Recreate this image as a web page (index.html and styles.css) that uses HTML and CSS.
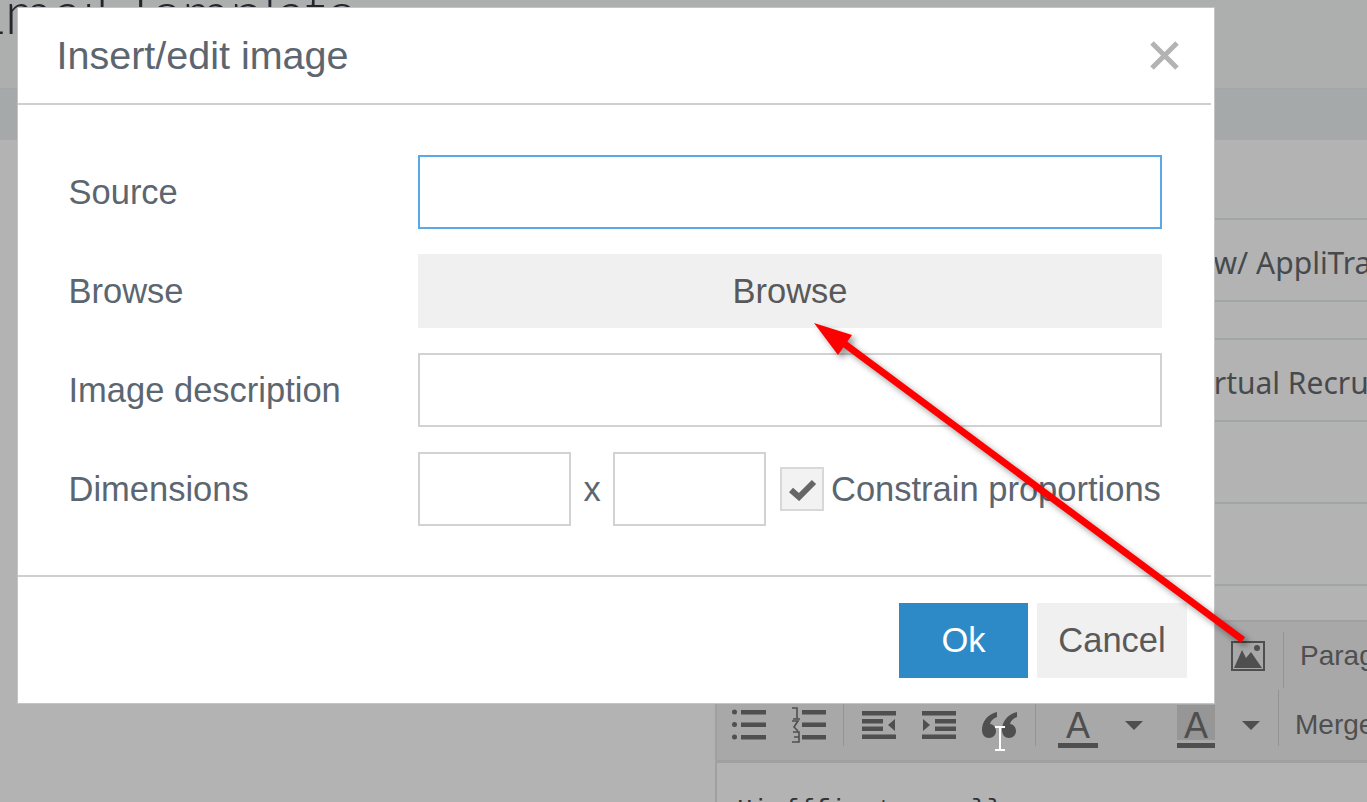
FILE: index.html
```html
<!DOCTYPE html>
<html lang="en">
<head>
    <meta charset="UTF-8">
    <title>Email Template</title>
    <link rel="stylesheet" href="styles.css">
</head>

<body>
    <div id="page">
        <div class="page-header">
            <h1 class="page-title">Email Template</h1>
        </div>
        <div class="tab-bar"></div>

        <div class="page-content">
            <div class="row row-tall"><span class="row-text row-text-first">Interview w/ AppliTrack</span></div>
            <div class="row row-short"></div>
            <div class="row row-tall"><span class="row-text row-text-second">Virtual Recruiter</span></div>
            <div class="row row-tall"></div>
            <div class="row row-tall"></div>
            <div class="row row-last"></div>

            <!--editor-->
            <div class="editor">
                <div class="toolbar toolbar-top">
                    <span class="tool tool-image">
                        <svg width="34" height="30" viewBox="0 0 34 30">
                            <rect x="1" y="1" width="32" height="28" fill="none" stroke="#4f4f4f" stroke-width="2"/>
                            <path d="M3 27 L11 9 L15 17 L20 11 L31 27 Z" fill="#4f4f4f"/>
                            <circle cx="26" cy="7" r="3" fill="#4f4f4f"/>
                        </svg>
                    </span>
                    <span class="sep sep-image"></span>
                    <span class="tool-text">Paragraph</span>
                </div>
                <div class="toolbar toolbar-bottom">
                    <span class="tool">
                        <svg width="34" height="34" viewBox="0 0 34 34" fill="#4f4f4f">
                            <circle cx="2.500" cy="4" r="2.500"/><rect x="9" y="2" width="25" height="4.500"/>
                            <circle cx="2.500" cy="16.500" r="2.500"/><rect x="9" y="14.500" width="25" height="4.500"/>
                            <circle cx="2.500" cy="29" r="2.500"/><rect x="9" y="27" width="25" height="4.500"/>
                        </svg>
                    </span>
                    <span class="tool">
                        <svg width="34" height="36" viewBox="0 0 34 36" fill="#4f4f4f">
                            <path d="M0 1 H5 V12 M1 12 H8 M0 14 H6 L2 20 L6 24 M1 25 H7 V35 H0 M2 30 H7" fill="none" stroke="#4f4f4f" stroke-width="1.600"/>
                            <rect x="10" y="3" width="24" height="4.500"/>
                            <rect x="10" y="15.500" width="24" height="4.500"/>
                            <rect x="10" y="28" width="24" height="4.500"/>
                        </svg>
                    </span>
                    <span class="sep"></span>
                    <span class="tool">
                        <svg width="34" height="28" viewBox="0 0 34 28" fill="#4f4f4f">
                            <rect x="0" y="0" width="34" height="4.500"/>
                            <rect x="0" y="8" width="21" height="4.500"/>
                            <rect x="0" y="15.500" width="21" height="4.500"/>
                            <rect x="0" y="23.500" width="34" height="4.500"/>
                            <path d="M26 14 L33 8 V20 Z"/>
                        </svg>
                    </span>
                    <span class="tool">
                        <svg width="34" height="28" viewBox="0 0 34 28" fill="#4f4f4f">
                            <rect x="0" y="0" width="34" height="4.500"/>
                            <rect x="13" y="8" width="21" height="4.500"/>
                            <rect x="13" y="15.500" width="21" height="4.500"/>
                            <rect x="0" y="23.500" width="34" height="4.500"/>
                            <path d="M8 14 L1 8 V20 Z"/>
                        </svg>
                    </span>
                    <span class="tool">
                        <svg width="35" height="26" viewBox="0 0 35 26" fill="#4f4f4f">
                            <path d="M15 0 C6 2 0 9 0 18 C0 23 3 26 7 26 C11 26 14 23 14 19 C14 15 11 12 8 12 C9 8 12 6 15 5 Z"/>
                            <path d="M35 0 C26 2 20 9 20 18 C20 23 23 26 27 26 C31 26 34 23 34 19 C34 15 31 12 28 12 C29 8 32 6 35 5 Z"/>
                        </svg>
                    </span>
                    <span class="sep sep-quote"></span>
                    <span class="color-btn">
                        <span class="color-a">A</span>
                        <span class="color-bar"></span>
                    </span>
                    <span class="caret caret-first"></span>
                    <span class="color-btn color-btn-active">
                        <span class="color-a">A</span>
                        <span class="color-bar"></span>
                    </span>
                    <span class="caret caret-second"></span>
                    <span class="sep sep-merge"></span>
                    <span class="tool-text">Merge Fields</span>
                </div>
                <div class="editor-body">Hi {{first_name}},</div>
            </div>
        </div>
    </div>

    <!--dialog-->
    <div class="modal">
        <div class="modal-head">
            <h2 class="modal-title">Insert/edit image</h2>
            <svg class="modal-close" width="31" height="31" viewBox="0 0 31 31">
                <path d="M3 3 L28 28 M28 3 L3 28" stroke="#b3b3b3" stroke-width="5" fill="none"/>
            </svg>
        </div>
        <div class="modal-body">
            <div class="form-row">
                <label class="form-label">Source</label>
                <input type="text" class="field field-focus">
            </div>
            <div class="form-row">
                <label class="form-label">Browse</label>
                <button type="button" class="btn btn-browse">Browse</button>
            </div>
            <div class="form-row">
                <label class="form-label">Image description</label>
                <input type="text" class="field">
            </div>
            <div class="form-row">
                <label class="form-label">Dimensions</label>
                <div class="dims">
                    <input type="text" class="field field-small">
                    <span class="dims-x">x</span>
                    <input type="text" class="field field-small">
                    <span class="check">
                        <svg width="29" height="23" viewBox="0 0 29 23">
                            <path d="M3 12 L11 19 L26 4" fill="none" stroke="#666666" stroke-width="6"/>
                        </svg>
                    </span>
                    <span class="check-label">Constrain proportions</span>
                </div>
            </div>
        </div>
        <div class="modal-foot">
            <button type="button" class="btn btn-ok">Ok</button>
            <button type="button" class="btn btn-cancel">Cancel</button>
        </div>
    </div>

    <!--annotation arrow and mouse cursor-->
    <svg class="arrow" width="1367" height="802" viewBox="0 0 1367 802">
        <path d="M1243 640 L842 342" stroke="#ff0000" stroke-width="7" fill="none"/>
        <path d="M814 323 L852 335 L838 355 Z" fill="#ff0000"/>
    </svg>
    <svg class="cursor" width="12" height="25" viewBox="0 0 12 25">
        <path d="M1 1 H11 M1 24 H11 M6 1 V24" stroke="#ffffff" stroke-width="2" fill="none"/>
    </svg>
</body>
</html>
```

FILE: styles.css
```css
body {
    margin: 0;
    width: 1367px;
    height: 802px;
    overflow: hidden;
    font-family: "Liberation Sans", Arial, sans-serif;
    background-color: #b3b3b3;
}
#page {
    height: 802px;
    overflow: hidden;
}
.page-header {
    height: 88px;
    background-color: #adafae;
    border-bottom: 1px solid #a3a7a7;
    overflow: hidden;
}
.page-title {
    margin: -21px 0 0 -29px;
    font-family: "Lato", sans-serif;
    font-weight: 300;
    font-size: 60px;
    line-height: 64px;
    color: #23262d;
    white-space: nowrap;
}
.tab-bar {
    height: 51px;
    background-color: #a5a9a9;
}
.page-content {
    padding-top: 78px;
}
.row {
    box-sizing: border-box;
    margin-left: 715px;
    padding-top: 4px;
    border-top: 2px solid #a0a5a5;
    display: flex;
    align-items: center;
    font-family: "Noto Sans", sans-serif;
    font-size: 30px;
    color: #464a4d;
    white-space: nowrap;
}
.row-tall {
    height: 82px;
}
.row-short {
    height: 38px;
}
.row-last {
    height: 36px;
}
.row-text-first {
    margin-left: 359px;
}
.row-text-second {
    margin-left: 473px;
}
.editor {
    margin-left: 715px;
    border-left: 2px solid #a0a0a0;
}
.toolbar {
    display: flex;
    align-items: center;
    background-color: #a8a8a8;
    color: #4f4f4f;
    white-space: nowrap;
}
.toolbar > * {
    flex: none;
}
.toolbar-top {
    height: 70px;
    padding-left: 514px;
    border-top: 2px solid #a0a0a0;
    box-sizing: border-box;
}
.toolbar-bottom {
    height: 70px;
    padding-left: 15px;
}
.tool {
    display: flex;
    margin-right: 26px;
}
.tool-image {
    margin-right: 18px;
}
.tool-text {
    font-size: 28px;
    margin-left: 16px;
}
.sep {
    width: 1px;
    height: 56px;
    margin-right: 18px;
    margin-left: -9px;
    background-color: #939393;
    align-self: flex-start;
}
.sep-image {
    margin: 10px 0 0;
}
.sep-quote {
    margin-left: -8px;
    margin-right: 22px;
}
.sep-merge {
    margin-left: 18px;
    margin-right: 0;
}
.color-btn {
    width: 40px;
    height: 43px;
    margin-top: 2px;
    display: flex;
    flex-direction: column;
    align-items: center;
}
.color-btn-active {
    width: 38px;
}
.color-a {
    width: 100%;
    height: 35px;
    text-align: center;
    font-size: 36px;
    line-height: 41px;
}
.color-bar {
    width: 100%;
    height: 5px;
    margin-top: 3px;
    background-color: #4f4f4f;
}
.color-btn-active .color-a {
    background-color: #969696;
}
.caret {
    width: 0;
    height: 0;
    border-left: 9px solid transparent;
    border-right: 9px solid transparent;
    border-top: 9px solid #4f4f4f;
}
.caret-first {
    margin: 0 34px 0 27px;
}
.caret-second {
    margin-left: 27px;
}
.editor-body {
    border-top: 3px solid #a0a0a0;
    padding: 32px 0 0 20px;
    font-family: "Liberation Mono", monospace;
    font-size: 26px;
    color: #333333;
}
.modal {
    position: absolute;
    left: 18px;
    top: 8px;
    box-sizing: border-box;
    width: 1196px;
    height: 695px;
    background-color: #ffffff;
    color: #5c6670;
    box-shadow: 0 0 0 1px #c4c4c4;
}
.modal-head {
    box-sizing: border-box;
    height: 97px;
    margin-right: 3px;
    padding: 0 31px 0 38.500px;
    border-bottom: 2px solid #cfcfcf;
    display: flex;
    align-items: center;
    justify-content: space-between;
}
.modal-title {
    margin: 0;
    font-size: 39.500px;
    font-weight: normal;
    color: #5c6670;
}
.modal-body {
    box-sizing: border-box;
    height: 472px;
    margin-right: 3px;
    padding: 50px 49px 0 50.500px;
    border-bottom: 2px solid #cfcfcf;
    display: flex;
    flex-direction: column;
    gap: 25px;
}
.form-row {
    display: flex;
    align-items: center;
    height: 74px;
}
.form-label {
    width: 349.500px;
    flex: none;
    font-size: 34.500px;
}
.field {
    box-sizing: border-box;
    flex: 1;
    height: 74px;
    border: 2px solid #d2d2d2;
    background-color: #fff;
    outline: none;
}
.field-focus {
    border-color: #59a9e8;
}
.field-small {
    flex: none;
    width: 153px;
}
.btn {
    border: none;
    height: 74px;
    font-family: inherit;
    font-size: 34.500px;
    color: #595959;
    background-color: #f0f0f0;
    padding: 0;
}
.btn-browse {
    flex: 1;
}
.dims {
    display: flex;
    align-items: center;
    flex: 1;
    font-size: 34.500px;
    white-space: nowrap;
}
.dims-x {
    width: 42px;
    text-align: center;
}
.check {
    box-sizing: border-box;
    width: 44px;
    height: 44px;
    margin-left: 14px;
    margin-right: 7px;
    border: 2px solid #d8d8d8;
    background-color: #f2f2f2;
    display: flex;
    align-items: center;
    justify-content: center;
}
.modal-foot {
    display: flex;
    justify-content: flex-end;
    gap: 9px;
    padding: 26px 27px 0 0;
}
.btn-ok {
    width: 129px;
    height: 75px;
    background-color: #2d8ac7;
    color: #ffffff;
}
.btn-cancel {
    width: 150px;
    height: 75px;
}
.arrow {
    position: absolute;
    left: 0;
    top: 0;
    filter: drop-shadow(4px 4px 3px rgba(0, 0, 0, 0.4));
}
.cursor {
    position: absolute;
    left: 994px;
    top: 726px;
}
```
